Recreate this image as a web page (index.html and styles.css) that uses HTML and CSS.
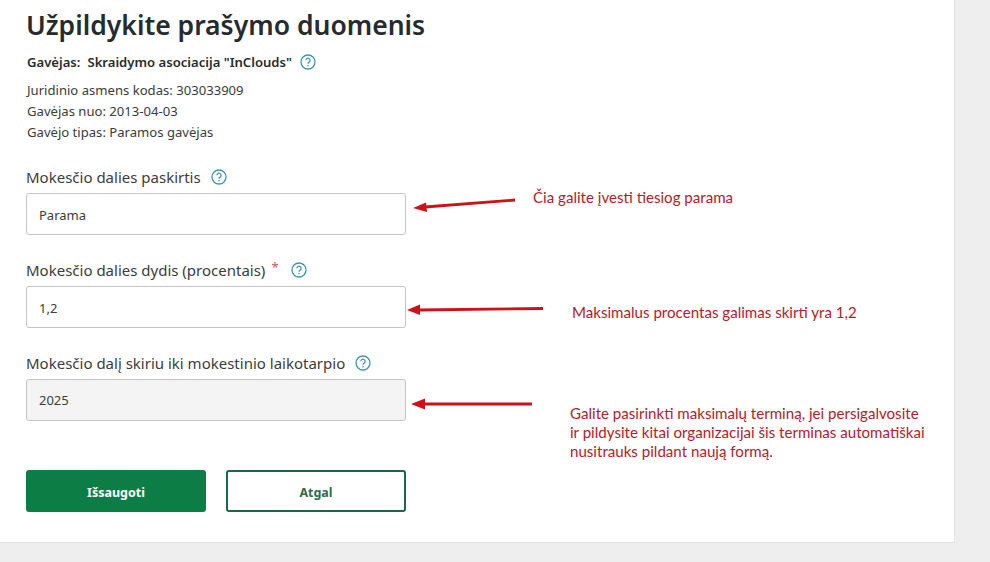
FILE: index.html
```html
<!DOCTYPE html>
<html lang="lt">
<head>
  <meta charset="UTF-8">
  <title>Užpildykite prašymo duomenis</title>
  <link rel="stylesheet" href="styles.css">
</head>
<body>
  <div class="card">
    <h1 class="page-title">Užpildykite prašymo duomenis</h1>

    <!-- RECIPIENT -->
    <div class="recipient">
      <span class="recipient-key">Gavėjas:</span>
      <span class="recipient-name">Skraidymo asociacija "InClouds"</span>
      <svg class="help" viewBox="0 0 16 16"><circle cx="8" cy="8" r="7"/><path d="M5.9 6.3a2.1 2.1 0 1 1 3.2 1.8c-.7.4-1.1.8-1.1 1.6"/><circle class="dot" cx="8" cy="11.8" r=".8"/></svg>
    </div>
    <div class="recipient-info">
      Juridinio asmens kodas: 303033909<br>
      Gavėjas nuo: 2013-04-03<br>
      Gavėjo tipas: Paramos gavėjas
    </div>

    <!-- FORM -->
    <div class="field">
      <div class="field-label">Mokesčio dalies paskirtis
        <svg class="help" viewBox="0 0 16 16"><circle cx="8" cy="8" r="7"/><path d="M5.9 6.3a2.1 2.1 0 1 1 3.2 1.8c-.7.4-1.1.8-1.1 1.6"/><circle class="dot" cx="8" cy="11.8" r=".8"/></svg>
      </div>
      <div class="input">Parama</div>
    </div>
    <div class="field">
      <div class="field-label">Mokesčio dalies dydis (procentais) <span class="required">*</span>
        <svg class="help" viewBox="0 0 16 16"><circle cx="8" cy="8" r="7"/><path d="M5.9 6.3a2.1 2.1 0 1 1 3.2 1.8c-.7.4-1.1.8-1.1 1.6"/><circle class="dot" cx="8" cy="11.8" r=".8"/></svg>
      </div>
      <div class="input">1,2</div>
    </div>
    <div class="field">
      <div class="field-label">Mokesčio dalį skiriu iki mokestinio laikotarpio
        <svg class="help" viewBox="0 0 16 16"><circle cx="8" cy="8" r="7"/><path d="M5.9 6.3a2.1 2.1 0 1 1 3.2 1.8c-.7.4-1.1.8-1.1 1.6"/><circle class="dot" cx="8" cy="11.8" r=".8"/></svg>
      </div>
      <div class="input input-disabled">2025</div>
    </div>

    <div class="buttons">
      <div class="btn btn-primary">Išsaugoti</div>
      <div class="btn btn-secondary">Atgal</div>
    </div>
  </div>

  <!-- ANNOTATIONS OVER THE SCREENSHOT -->
  <svg class="arrows" viewBox="0 0 990 562">
    <path d="M515 200 L425 207"/>
    <path d="M543 308.500 L418 310"/>
    <path d="M532 404 L424 404"/>
    <polygon points="413,208 426,202.500 427,212"/>
    <polygon points="407,310 420,304.500 420,315"/>
    <polygon points="411,404 425,398.500 425,409.500"/>
  </svg>
  <div class="note note-1">Čia galite įvesti tiesiog parama</div>
  <div class="note note-2">Maksimalus procentas galimas skirti yra 1,2</div>
  <div class="note note-3">Galite pasirinkti maksimalų terminą, jei persigalvosite<br>ir pildysite kitai organizacijai šis terminas automatiškai<br>nusitrauks pildant naują formą.</div>
</body>
</html>
```

FILE: styles.css
```css
body {
  margin: 0;
  height: 562px;
  overflow: hidden;
  background: #eeeeee;
  font-family: "Noto Sans", sans-serif;
  color: #2b2b2b;
}

.card {
  box-sizing: border-box;
  width: 955px;
  height: 543px;
  padding: 7px 0 0 26px;
  background: #fff;
  border-right: 1px solid #e6e6e6;
  border-bottom: 1px solid #e0e0e0;
}

.page-title {
  margin: 0;
  font-size: 26.5px;
  line-height: 36px;
  font-weight: 600;
  color: #262b2e;
}

/* RECIPIENT */
.recipient {
  display: flex;
  align-items: center;
  gap: 7px;
  margin: 9px 0 0 1px;
  height: 20px;
  font-size: 13.1px;
  font-weight: 600;
}

.recipient .help {
  margin-left: 1px;
}

.recipient-info {
  margin: 8px 0 0 1px;
  font-size: 13.1px;
  line-height: 21px;
  color: #3c3c3c;
}

/* FORM */
.field {
  width: 380px;
  margin-top: 22px;
}

.field + .field {
  margin-top: 23px;
}

.field-label {
  display: flex;
  align-items: center;
  gap: 6px;
  height: 24px;
  font-size: 15px;
  color: #3c3c3c;
}

.required {
  align-self: flex-start;
  margin: 0 2px 0 0;
  color: #d9534f;
  font-size: 13px;
}

.input {
  box-sizing: border-box;
  height: 42px;
  margin-top: 4px;
  padding: 0 12px;
  border: 1px solid #c4c4c4;
  border-radius: 3px;
  background: #fff;
  font-size: 13px;
  line-height: 42px;
  color: #3c3c3c;
}

.input-disabled {
  background: #f4f4f4;
  line-height: 40px;
}

.help {
  flex: none;
  width: 16px;
  height: 16px;
  margin-left: 4px;
  fill: none;
  stroke: #3f97ad;
  stroke-width: 1.3;
}

.help .dot {
  fill: #3f97ad;
  stroke: none;
}

.buttons {
  display: flex;
  gap: 20px;
  margin-top: 49px;
}

.btn {
  box-sizing: border-box;
  width: 180px;
  height: 42px;
  border-radius: 3px;
  font-size: 12.5px;
  font-weight: 700;
  line-height: 45px;
  text-align: center;
}

.btn-primary {
  background: #0b7d45;
  color: #fff;
}

.btn-secondary {
  border: 2px solid #17694a;
  line-height: 41px;
  color: #2f6b4f;
}

/* ANNOTATIONS */
.arrows {
  position: absolute;
  left: 0;
  top: 0;
  width: 990px;
  height: 562px;
  fill: #d01018;
}

.arrows path {
  fill: none;
  stroke: #d01018;
  stroke-width: 2.8;
}

.note {
  position: absolute;
  font-family: "Lato", sans-serif;
  font-size: 15.1px;
  line-height: 19px;
  color: #b5202b;
  white-space: nowrap;
}

.note-1 { left: 533px; top: 188px; }
.note-2 { left: 572px; top: 303px; }
.note-3 { left: 570px; top: 404px; }
```
